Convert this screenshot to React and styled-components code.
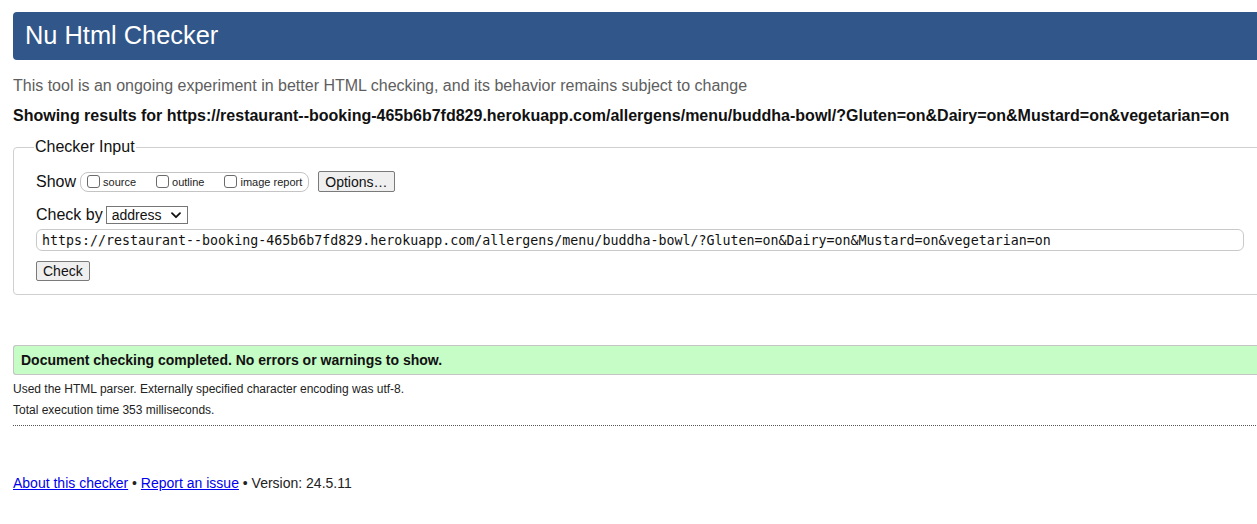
import React from "react";
import styled, { createGlobalStyle } from "styled-components";

const Global = createGlobalStyle`
  html, body { margin: 0; padding: 0; overflow: hidden; background: #fff; }
  body { font-family: "Liberation Sans", Arial, sans-serif; color: #000; }
`;

const Page = styled.div`
  width: 1290px;
  padding: 12px 0 40px 13px;
  box-sizing: border-box;
`;

const Banner = styled.h1`
  margin: 0;
  height: 48px;
  line-height: 47px;
  padding-left: 12px;
  background: #315689;
  color: #fff;
  font-size: 25.4px;
  font-weight: normal;
  border-radius: 4px 0 0 4px;
`;

const Intro = styled.p`
  margin: 16px 0 0;
  font-size: 16px;
  line-height: 20px;
  color: #5e5e5e;
`;

const ResultsFor = styled.p`
  margin: 10px 0 0;
  font-size: 16px;
  line-height: 20px;
  font-weight: bold;
  color: #111;
`;

const Fieldset = styled.fieldset`
  margin: 12px 0 0;
  padding: 4px 22px 13px 22px;
  border: 1px solid #cfcfcf;
  border-radius: 4px;
  width: 1262px;
  box-sizing: border-box;
`;

const Legend = styled.legend`
  padding: 0 1px;
  margin-left: -2px;
  font-size: 16px;
  line-height: 18px;
  color: #111;
`;

const Row = styled.div`
  display: flex;
  align-items: center;
  margin-top: ${(p) => p.$mt || 0}px;
  font-size: 16px;
  color: #111;
`;

const Label = styled.span`
  margin-right: ${(p) => p.$mr || 0}px;
`;

const Group = styled.span`
  display: inline-flex;
  align-items: center;
  height: 20px;
  box-sizing: border-box;
  border: 1px solid #c4c4c4;
  border-radius: 8px;
  padding: 0 6px 0 2px;
  margin-right: 9px;
`;

const Check = styled.label`
  display: inline-flex;
  align-items: center;
  font-size: 11px;
  margin-right: ${(p) => p.$mr || 0}px;
  color: #222;
`;

const Box = styled.span`
  width: 13px;
  height: 13px;
  box-sizing: border-box;
  border: 1px solid #6b6b6b;
  border-radius: 3px;
  margin: 0 3px 0 4px;
  background: #fff;
`;

const Button = styled.button`
  font-family: "Liberation Sans", Arial, sans-serif;
  font-size: 14px;
  color: #111;
  height: ${(p) => p.$h || 20}px;
  padding: 0 ${(p) => p.$px || 6}px;
  background: #efefef;
  border: 1px solid #7a7a7a;
  border-radius: 2px;
  line-height: 1;
`;

const SelectWrap = styled.span`
  position: relative;
  display: inline-flex;
  margin-left: 3px;
`;

const Select = styled.select`
  appearance: none;
  -webkit-appearance: none;
  width: 82px;
  height: 18px;
  box-sizing: border-box;
  border: 1px solid #767676;
  border-radius: 0;
  background: #fff;
  padding: 0 0 0 5px;
  font-family: "Liberation Sans", Arial, sans-serif;
  font-size: 14px;
  color: #111;
`;

const Chevron = styled.svg`
  position: absolute;
  right: 7px;
  top: 6px;
  pointer-events: none;
`;

const UrlInput = styled.input`
  display: block;
  width: 1208px;
  height: 22px;
  box-sizing: border-box;
  margin-top: 5px;
  border: 1px solid #c9c9c9;
  border-radius: 6px;
  padding: 0 5px;
  font-family: "DejaVu Sans Mono", Menlo, monospace;
  font-size: 13.3px;
  color: #111;
  outline: none;
`;

const Success = styled.p`
  margin: 50px 0 0;
  height: 30px;
  line-height: 28px;
  box-sizing: border-box;
  background: #c6fcc6;
  border: 1px solid #c4c4c4;
  border-right: none;
  border-radius: 3px 0 0 3px;
  padding-left: 7px;
  font-size: 14px;
  font-weight: bold;
  color: #111;
`;

const Info = styled.p`
  margin: ${(p) => p.$mt || 0}px 0 0;
  font-size: 12px;
  line-height: 21px;
  color: #222;
`;

const Rule = styled.hr`
  margin: 4px 0 0;
  border: none;
  border-top: 1px dotted #555;
  height: 0;
`;

const Footer = styled.p`
  margin: 48px 0 0;
  font-size: 14px;
  line-height: 18px;
  color: #222;
`;

const Link = styled.a`
  color: #0000ee;
  text-decoration: underline;
`;

const URL =
  "https://restaurant--booking-465b6b7fd829.herokuapp.com/allergens/menu/buddha-bowl/?Gluten=on&Dairy=on&Mustard=on&vegetarian=on";

export default function App() {
  return (
    <>
      <Global />
      <Page>
        <Banner>Nu Html Checker</Banner>
        <Intro>
          This tool is an ongoing experiment in better HTML checking, and its
          behavior remains subject to change
        </Intro>
        <ResultsFor>Showing results for {URL}</ResultsFor>
        <Fieldset>
          <Legend>Checker Input</Legend>
          <Row $mt={11}>
            <Label $mr={4}>Show</Label>
            <Group>
              <Check $mr={16}>
                <Box />
                source
              </Check>
              <Check $mr={16}>
                <Box />
                outline
              </Check>
              <Check>
                <Box />
                image report
              </Check>
            </Group>
            <Button $h={21} $px={6}>Options…</Button>
          </Row>
          <Row $mt={14}>
            <Label>Check by</Label>
            <SelectWrap>
              <Select defaultValue="address">
                <option value="address">address</option>
                <option value="file">file upload</option>
                <option value="text">text input</option>
              </Select>
              <Chevron width="10" height="7" viewBox="0 0 10 7">
                <path
                  d="M1 1.2 L5 5.2 L9 1.2"
                  fill="none"
                  stroke="#111"
                  strokeWidth="1.8"
                  strokeLinecap="round"
                  strokeLinejoin="round"
                />
              </Chevron>
            </SelectWrap>
          </Row>
          <UrlInput defaultValue={URL} />
          <Row $mt={10}>
            <Button $h={20} $px={6}>Check</Button>
          </Row>
        </Fieldset>
        <Success>Document checking completed. No errors or warnings to show.</Success>
        <Info $mt={4}>
          Used the HTML parser. Externally specified character encoding was utf-8.
        </Info>
        <Info>Total execution time 353 milliseconds.</Info>
        <Rule />
        <Footer>
          <Link href="#">About this checker</Link> •{" "}
          <Link href="#">Report an issue</Link> • Version: 24.5.11
        </Footer>
      </Page>
    </>
  );
}
